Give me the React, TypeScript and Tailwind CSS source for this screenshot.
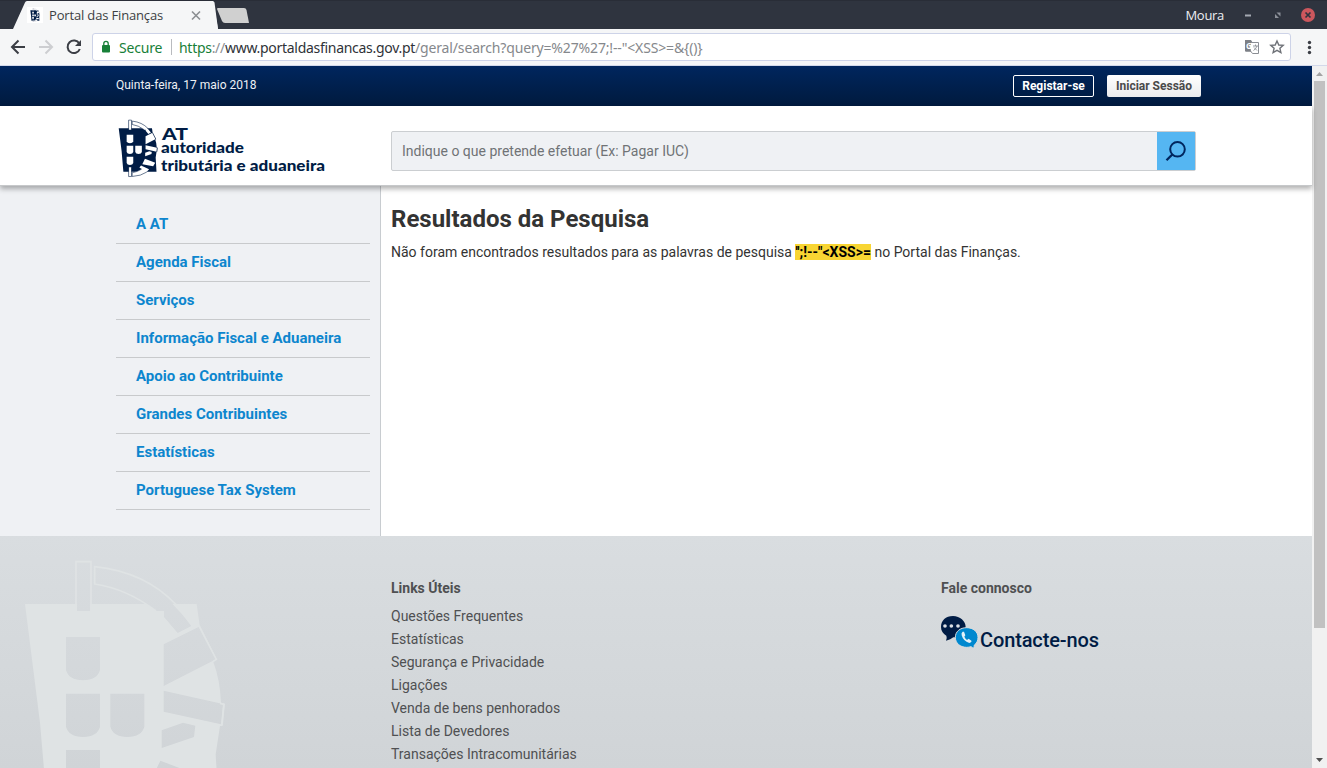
import React from "react";

const menu = [
  "A AT",
  "Agenda Fiscal",
  "Serviços",
  "Informação Fiscal e Aduaneira",
  "Apoio ao Contribuinte",
  "Grandes Contribuintes",
  "Estatísticas",
  "Portuguese Tax System",
];

const links = [
  "Questões Frequentes",
  "Estatísticas",
  "Segurança e Privacidade",
  "Ligações",
  "Venda de bens penhorados",
  "Lista de Devedores",
  "Transações Intracomunitárias",
];

const shield = "h102v99q-8 30-51 31q-43-1-51-31z";

function Emblem({ id, className, viewBox, line }: { id: string; className: string; viewBox: string; line: number }) {
  return (
    <svg className={className} viewBox={viewBox} fill="none">
      <mask id={id} maskUnits="userSpaceOnUse" x="0" y="0" width="760" height="1000">
        <rect width="760" height="1000" fill="#fff" />
        <g fill="#000">
          <path d={`M198 303${shield}`} />
          <path d={`M198 473${shield}`} />
          <path d={`M331 473${shield}`} />
          <path d={`M198 642${shield}`} />
          <path d="M231 80H271V225H231zM231 806H271V948H231z" />
          <path d="M285 92Q460 112 574 270L533 291L492 243V225H468Q380 158 285 144z" />
          <path d="M491 325L597 272L648 370L491 450z" />
          <path d="M491 464L669 504L663 565L491 527z" />
          <path d="M485 583L549 560L586 569L582 603L485 636z" />
          <path d="M481 674L640 735L608 790L440 760z" />
          <path d="M420 780L545 838L480 905Q400 945 285 948V890Q360 880 430 835L395 810z" />
        </g>
      </mask>
      <path
        d="M75 204H590L599 268L650 370L640 378Q660 430 663 500L674 503L667 570L660 570L647 655L660 874H147L120 560z"
        fill="currentColor"
        mask={`url(#${id})`}
      />
      <g stroke="currentColor" strokeWidth={line}>
        <path d="M228 225V77H273V225M228 806V950H273V806" />
        <path d="M468 225Q380 158 284 144V92Q436 108 528 206" />
        <path d="M597 270L649 370L638 377M660 502L672 505L666 568" />
        <path d="M430 835Q360 880 284 890V949Q420 942 510 880" />
      </g>
    </svg>
  );
}

function TabStrip() {
  return (
    <div className="flex h-[29px] items-start justify-between border-t border-[#292d37] bg-[#2f343f] font-['Open_Sans',sans-serif]">
      <div className="grid">
        <svg className="col-start-1 row-start-1 h-[28px] w-[260px]" viewBox="0 0 260 28">
          <path d="M13 28L25 1.500Q25.500 0 27 0H212.500Q214 0 214.500 1.500L218 28z" fill="#f5f6f7" />
          <path d="M218 7H244Q246 7 246.500 9L249 22H225Q223 22 222 20L217 8Q217 7 218 7z" fill="#d0d0d0" />
          <path d="M205 0H213L218 28H205z" fill="#f5f6f7" />
          <path d="M192 10.500L200 18.500M200 10.500L192 18.500" stroke="#8b8e91" strokeWidth="1.600" />
        </svg>
        <div className="col-start-1 row-start-1 flex h-[28px] items-center pl-[27px]">
          <span className="flex size-4 items-center justify-center bg-white text-[#001c45]">
            <Emblem id="tab-emblem" className="h-[14px] w-[12px]" viewBox="60 60 630 900" line={6} />
          </span>
          <span className="ml-[6px] text-[13px] leading-none tracking-[-0.16px] text-[#3c3f43]">Portal das Finanças</span>
        </div>
      </div>
      <div className="flex h-[28px] items-center pr-[12px]">
        <span className="text-[13px] leading-none tracking-[-0.3px] text-[#eceef2]">Moura</span>
        <svg className="ml-[21px] h-[28px] w-[70px]" viewBox="1245 0 70 28">
          <path d="M1245 14.500h6" stroke="#a5a9b2" strokeWidth="2" />
          <path d="M1276.500 11.500h4v4zM1275 13v4h4z" fill="#8c9099" />
          <circle cx="1308" cy="14" r="7" fill="#cc575d" />
          <path d="M1305.500 11.500l5 5M1310.500 11.500l-5 5" stroke="#2f343f" strokeWidth="1.700" />
        </svg>
      </div>
    </div>
  );
}

function Toolbar() {
  return (
    <div className="flex h-[37px] items-start border-b border-[#d3d9ea] bg-[#f5f6f7] pt-1 font-['Noto_Sans',sans-serif] text-[14px]">
      <svg className="h-7 w-[92px] shrink-0" viewBox="0 33 92 28" fill="none" strokeWidth="2">
        <path d="M25 47H12.500M18.500 40.500L12 47L18.500 53.500" stroke="#3b3e45" />
        <path d="M39 47H51.500M45.500 40.500L52 47L45.500 53.500" stroke="#cdced1" />
        <path d="M79.300 43.500A6.300 6.300 0 1 0 79.800 49" stroke="#3b3e45" />
        <path d="M81 40V46H75z" fill="#3b3e45" />
      </svg>
      <div className="flex h-7 w-[1199px] items-center rounded-[3px] border border-[#cdd3e8] bg-white">
        <svg className="ml-2 h-4 w-[10px] shrink-0" viewBox="0 0 10 16">
          <rect x="1" y="6" width="8" height="7.500" rx="1" fill="#188038" />
          <path d="M2.800 6V4.500a2.200 2.200 0 0 1 4.400 0V6" fill="none" stroke="#188038" strokeWidth="1.300" />
        </svg>
        <span className="ml-2 w-[43px] tracking-[-0.2px] text-[#188038]">Secure</span>
        <span className="ml-[9px] h-4 w-px bg-[#b9bbbf]" />
        <span className="ml-[7px] whitespace-pre tracking-[-0.29px] text-[#2f3237]">
          <span className="text-[#188038]">https</span>
          <span className="text-[#8b8e92]">://</span>www.portaldasfinancas.gov.pt
        </span>
        <span className="whitespace-pre tracking-[-0.15px] text-[#85888c]">{'/geral/search?query=%27%27;!--"<XSS>=&{()}'}</span>
        <svg className="mr-[5px] ml-auto h-5 w-[42px]" viewBox="1243 37 42 20">
          <path d="M1245 40h6l1.500 2.500h-1l2.500 9h-8q-1 0-1-1z" fill="#7d8086" />
          <path d="M1251 42.500h7.500v11h-6l-2-2.500" fill="#fff" stroke="#8b8e94" />
          <path d="M1251 51.500L1248 40h-3v10.500q0 1 1 1z" fill="#7d8086" />
          <text x="1246" y="49" fontSize="8" fontWeight="700" fill="#fff">G</text>
          <path d="M1253 46h5M1255.500 44.500v1.500M1257 46q-1 3-3.500 4.500M1254 47.500l3 3" stroke="#8b8e94" fill="none" strokeWidth=".9" />
          <path d="M1277 41l1.800 4 4.400.400-3.300 2.900 1 4.300-3.900-2.300-3.900 2.300 1-4.300-3.300-2.900 4.400-.400z" fill="none" stroke="#6f7278" strokeWidth="1.400" />
        </svg>
      </div>
      <svg className="h-7 w-9" viewBox="1291 33 36 28" fill="#3b3e45">
        <circle cx="1309.500" cy="42.500" r="1.700" />
        <circle cx="1309.500" cy="47.500" r="1.700" />
        <circle cx="1309.500" cy="52.500" r="1.700" />
      </svg>
    </div>
  );
}

function TopBar() {
  return (
    <div className="flex h-10 justify-between bg-linear-to-b from-[#00265e] to-[#001a3e] pt-[9px] pr-[111px] pl-[116px] text-[12px]">
      <span className="mt-px leading-[18px] text-[#eef0f4]">Quinta-feira, 17 maio 2018</span>
      <div className="flex gap-[13px] font-bold">
        <button className="h-[22px] w-[81px] rounded-[2px] border border-white leading-5 text-white">Registar-se</button>
        <button className="h-[22px] w-[94px] rounded-[2px] bg-linear-to-b from-white to-[#ebecee] leading-[22px] text-[#4a4a4a]">Iniciar Sessão</button>
      </div>
    </div>
  );
}

function Header() {
  return (
    <header className="z-10 flex h-20 border-b border-[#c6c8ca] bg-white shadow-[0_3px_5px_rgba(0,0,0,0.3)]">
      <div className="flex pt-3 pl-[116px] text-[#001c45]">
        <Emblem id="header-emblem" className="h-[61px] w-[44px]" viewBox="33 44 681 944" line={9} />
        <svg className="h-[61px] w-[170px]" viewBox="160 118 170 61" fill="currentColor" fontWeight="700" fontFamily="Lato, sans-serif">
          <text x="162" y="140" fontSize="16" fontWeight="900" textLength="26" lengthAdjust="spacingAndGlyphs">AT</text>
          <text x="161" y="153" fontSize="15.500" fontWeight="900" textLength="83" lengthAdjust="spacingAndGlyphs">autoridade</text>
          <text x="161" y="171" fontSize="15.500" fontWeight="900" textLength="164" lengthAdjust="spacingAndGlyphs">tributária e aduaneira</text>
        </svg>
      </div>
      <div className="mt-[25px] ml-[61px] flex h-10 w-[805px] rounded-[2px] border border-[#cbced1] bg-[#eff1f4]">
        <input className="min-w-0 flex-1 bg-transparent px-[10px] text-[14px] outline-none placeholder:text-[#707376]" placeholder="Indique o que pretende efetuar (Ex: Pagar IUC)" />
        <button className="h-[38px] w-[38px] bg-[#55b6f2]" aria-label="Pesquisar">
          <svg className="size-[38px]" viewBox="0 0 38 38" fill="none" stroke="#00265e" strokeWidth="2">
            <circle cx="20.500" cy="17.300" r="7.300" />
            <path d="M15.300 22.500L9.500 28.300" strokeWidth="2.300" />
          </svg>
        </button>
      </div>
    </header>
  );
}

function Footer() {
  return (
    <footer className="flex flex-1 overflow-hidden bg-linear-to-b from-[#d9dde0] to-[#d0d4d7] text-[14px] text-[#4f5052]">
      <Emblem id="footer-emblem" className="h-[232px] w-[240px] shrink-0 text-[#dfe3e4]" viewBox="0 0 720 696" line={5} />
      <div className="ml-[151px] w-[550px] pt-[42px]">
        <h2 className="mb-[7px] leading-5 font-bold">Links Úteis</h2>
        {links.map((text) => (
          <a key={text} className="block leading-[23px]">{text}</a>
        ))}
      </div>
      <div className="pt-[42px]">
        <h2 className="leading-5 font-bold">Fale connosco</h2>
        <div className="mt-[17px] flex">
          <svg className="-ml-px h-[34px] w-[39px]" viewBox="0 0 117 102">
            <path d="M39 3C17 3 3 17 3 36C3 47 9 57 19 62Q22 69 18 77Q32 74 40 67C62 67 77 54 77 36S60 3 39 3z" fill="#001c45" />
            <circle cx="15" cy="33" r="5.500" fill="#dbe0e6" />
            <circle cx="34" cy="33" r="5.500" fill="#dbe0e6" />
            <circle cx="54" cy="33" r="5.500" fill="#dbe0e6" />
            <path d="M80 38C60 38 46 50 46 67S60 97 80 97Q87 97 93 95Q97 99 104 99Q101 94 103 90C110 85 114 77 114 67C114 50 99 38 80 38z" fill="#0088cf" stroke="#d8dde0" strokeWidth="3" />
            <path d="M68 50Q63 54 65 61Q70 79 88 84Q94 83 95 78L86 71L81 75Q75 71 73 65L76 61L72 50z" fill="#e4f1f8" />
          </svg>
          <span className="mt-[13px] ml-px text-[20px] leading-6 font-medium tracking-[-0.13px] text-[#001c45]">Contacte-nos</span>
        </div>
      </div>
    </footer>
  );
}

function Scrollbar() {
  return (
    <div className="flex w-[15px] shrink-0 flex-col items-center bg-[#f1f1f1]">
      <svg className="h-[15px] w-[15px] shrink-0" viewBox="0 0 15 15">
        <path d="M4 10L7.500 6L11 10z" fill="#a3a3a3" />
      </svg>
      <div className="h-[547px] w-[11px] bg-[#c1c1c1]" />
      <svg className="mt-auto h-[15px] w-[15px] shrink-0" viewBox="0 0 15 15">
        <path d="M4 5L7.500 9L11 5z" fill="#505050" />
      </svg>
    </div>
  );
}

export default function App() {
  return (
    <div className="flex h-[768px] w-[1327px] flex-col overflow-hidden bg-white font-['Roboto',sans-serif]">
      <TabStrip />
      <Toolbar />
      <div className="flex min-h-0 flex-1">
        <div className="flex w-[1312px] flex-col">
          <TopBar />
          <Header />
          <div className="flex h-[350px]">
            <nav className="w-[381px] border-r border-[#c8ccd0] bg-[#eff1f4] pt-5 pr-[10px] pl-[116px]">
              {menu.map((text) => (
                <a key={text} className="block h-[38px] border-b border-[#c8cacc] pl-5 text-[15px] leading-[36px] font-bold text-[#0d86ce]">{text}</a>
              ))}
            </nav>
            <main className="pt-[17px] pl-[10px] text-[#333]">
              <h1 className="text-[24px] leading-8 font-bold">Resultados da Pesquisa</h1>
              <p className="mt-[7px] text-[14px] leading-5">
                Não foram encontrados resultados para as palavras de pesquisa{" "}
                <mark className="bg-[#f8d533] font-bold text-black">{'\'\';!--"<XSS>='}</mark> no Portal das Finanças.
              </p>
            </main>
          </div>
          <Footer />
        </div>
        <Scrollbar />
      </div>
    </div>
  );
}
